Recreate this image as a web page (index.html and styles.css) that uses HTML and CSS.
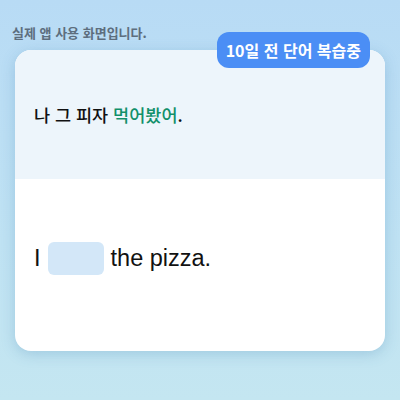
FILE: index.html
```html
<!DOCTYPE html>
<html lang="ko">
<head>
<meta charset="utf-8">
<link rel="stylesheet" href="styles.css">
</head>
<body>
<div class="page">
  <p class="caption">실제 앱 사용 화면입니다.</p>
  <div class="card">
    <span class="badge">10일 전 단어 복습중</span>
    <div class="prompt">
      <p class="ko">나 그 피자 <span class="hl">먹어봤어</span>.</p>
    </div>
    <div class="answer">
      <span class="word">I</span>
      <span class="blank"></span>
      <span class="word">the pizza.</span>
    </div>
  </div>
</div>
</body>
</html>
```
FILE: styles.css
```css
html, body {
  margin: 0;
  padding: 0;
}
body {
  width: 400px;
  height: 400px;
  overflow: hidden;
  background: linear-gradient(180deg, #b8dbf5 0%, #bfe2f3 60%, #c4e6f1 100%);
  font-family: "Noto Sans CJK KR", "Noto Sans", sans-serif;
}
.page {
  padding-top: 24px;
}
.caption {
  margin: 0 0 8px 12px;
  font-size: 13px;
  line-height: 18px;
  font-weight: 700;
  color: #5d6e7e;
}
.card {
  position: relative;
  margin: 0 15px;
  height: 301px;
  border-radius: 16px;
  background: #ffffff;
  box-shadow: 0 3px 14px rgba(70, 130, 175, 0.28);
}
.badge {
  position: absolute;
  top: -18px;
  right: 15px;
  height: 36px;
  padding: 0 9px;
  box-sizing: border-box;
  display: flex;
  align-items: center;
  border-radius: 12px;
  background: #4b8ef5;
  color: #ffffff;
  font-size: 16px;
  font-weight: 700;
  white-space: nowrap;
}
.prompt {
  height: 129px;
  box-sizing: border-box;
  padding: 52px 19px 0;
  background: #edf5fb;
  border-radius: 16px 16px 0 0;
}
.ko {
  margin: 0;
  font-size: 17.5px;
  line-height: 26px;
  font-weight: 500;
  color: #111111;
}
.hl {
  color: #12906a;
}
.answer {
  height: 172px;
  box-sizing: border-box;
  padding: 63px 19px 0;
  display: flex;
  align-items: flex-start;
  gap: 7px;
}
.word {
  font-family: "Liberation Sans", Arial, sans-serif;
  font-size: 23.5px;
  line-height: 33px;
  color: #111111;
}
.blank {
  width: 56px;
  height: 33px;
  border-radius: 6px;
  background: #d3e7f8;
}
```
